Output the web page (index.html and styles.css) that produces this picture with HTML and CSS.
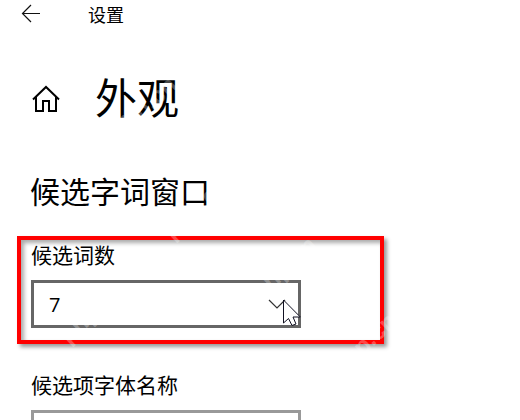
FILE: index.html
```html
<!DOCTYPE html>
<html lang="zh-CN">
<head>
    <meta charset="UTF-8">
    <meta name="viewport" content="width=device-width, initial-scale=1.0">
    <title>设置</title>
    <link rel="stylesheet" href="styles.css">
</head>
<body>
    <header class="titlebar">
        <button class="icon-button" type="button" aria-label="返回">
            <svg width="20" height="20" viewBox="0 0 20 20" fill="none" stroke="#111" stroke-width="1.2">
                <path d="M20 9.5H2.500M11 1L2.500 9.500L11 18"/>
            </svg>
        </button>
        <span class="app-name">设置</span>
    </header>
    <main class="content">
        <div class="page-head">
            <button class="icon-button" type="button" aria-label="主页">
                <svg width="28" height="28" viewBox="0 0 28 28" fill="none" stroke="#000" stroke-width="2">
                    <path d="M1 15.5L14 3L27 15.5M4 13V27H11V17H17V27H24V13"/>
                </svg>
            </button>
            <h1>外观</h1>
        </div>
        <h2>候选字词窗口</h2>
        <div class="field highlight">
            <label for="count">候选词数</label>
            <div class="select-wrap">
                <select id="count" class="active">
                    <option>5</option>
                    <option selected>7</option>
                    <option>9</option>
                </select>
                <svg class="chevron" width="18" height="10" viewBox="0 0 18 10" fill="none" stroke="#333" stroke-width="1.2">
                    <path d="M1 1L9 9L17 1"/>
                </svg>
                <svg class="cursor" width="18" height="28" viewBox="0 0 18 28" fill="#fff" stroke="#112" stroke-width="1">
                    <path d="M.5 1V24L5.500 19.500L9 26.500L13 25L10 18H17.300Z"/>
                </svg>
            </div>
        </div>
        <div class="field">
            <label for="font">候选项字体名称</label>
            <div class="select-wrap">
                <select id="font">
                    <option></option>
                </select>
            </div>
        </div>
    </main>
    <div class="watermarks" aria-hidden="true">
        <span class="mark mark-title">php.cn</span>
        <span class="mark mark-heading">php.cn</span>
        <span class="mark mark-left">php.cn</span>
        <span class="mark mark-middle">php.cn</span>
        <span class="mark mark-right">php.cn</span>
    </div>
</body>
</html>
```

FILE: styles.css
```css
* {
    box-sizing: border-box;
}
body {
    margin: 0;
    min-height: 100vh;
    overflow: hidden;
    background-color: #fff;
    color: #000;
    font-family: "Noto Sans CJK SC", sans-serif;
}
.icon-button {
    display: flex;
    padding: 0;
    border: none;
    background: none;
}
.titlebar {
    display: flex;
    align-items: center;
    gap: 48px;
    height: 28px;
    padding-left: 20px;
}
.app-name {
    font-size: 18px;
    line-height: 28px;
}
.content {
    padding: 40px 17px 0;
}
.page-head {
    display: flex;
    align-items: center;
    gap: 35px;
    padding-left: 15px;
}
h1 {
    margin: 0;
    padding-bottom: 4px;
    font-size: 42px;
    font-weight: 400;
    line-height: 56px;
}
h2 {
    margin: 42px 0 26px;
    padding-left: 13px;
    font-size: 30px;
    font-weight: 400;
    line-height: 40px;
}
.field {
    max-width: 367px;
    padding: 0 14px;
}
.highlight {
    margin-bottom: 26px;
    padding: 0 10px 12px;
    border: 4px solid #f00;
    box-shadow: 3px 3px 4px #999, inset 3px 3px 4px #aaa;
}
label {
    display: block;
    padding-bottom: 12px;
    font-size: 21px;
    line-height: 28px;
}
.select-wrap {
    position: relative;
    max-width: 270px;
}
select {
    display: block;
    width: 100%;
    height: 48px;
    padding: 0 15px;
    appearance: none;
    border: 3px solid #999;
    border-radius: 0;
    background-color: #fff;
    color: #000;
    font-family: "Open Sans", "Noto Sans CJK SC", sans-serif;
    font-size: 20px;
}
select.active {
    border-color: #666;
}
.chevron {
    position: absolute;
    top: 19px;
    right: 15px;
    pointer-events: none;
}
.cursor {
    position: absolute;
    top: 19px;
    right: 0;
    pointer-events: none;
}
.mark {
    position: absolute;
    width: 80px;
    color: rgba(255, 255, 255, 0.3);
    font-family: "Liberation Sans", sans-serif;
    font-size: 24px;
    font-weight: 700;
    line-height: 28px;
    text-align: center;
    transform: rotate(-43deg);
    pointer-events: none;
}
.mark-title {
    top: 94px;
    left: 104px;
}
.mark-heading {
    top: 194px;
    left: 156px;
}
.mark-left {
    top: 298px;
    left: 52px;
}
.mark-middle {
    top: 254px;
    left: 244px;
}
.mark-right {
    top: 330px;
    left: 324px;
}
```
